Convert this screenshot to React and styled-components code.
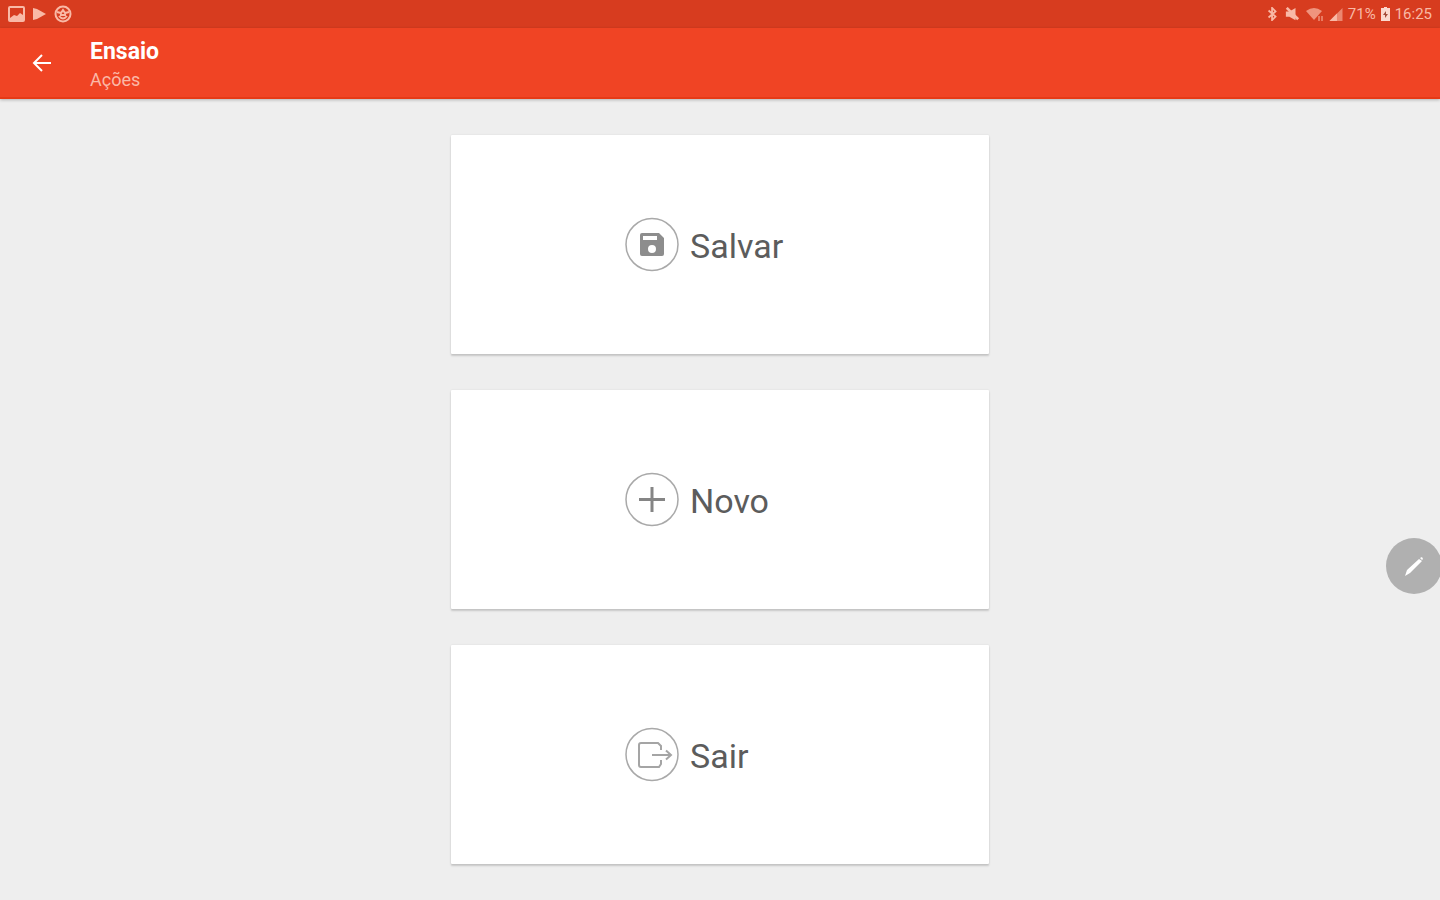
import React from "react";
import styled, { createGlobalStyle } from "styled-components";

const GlobalStyle = createGlobalStyle`
  * { box-sizing: border-box; }
  body {
    margin: 0;
    background: #eeeeee;
    font-family: Roboto, "Liberation Sans", sans-serif;
  }
  button { font: inherit; border: 0; padding: 0; cursor: pointer; }
`;

const Page = styled.div`
  min-height: 100vh;
  background: #eeeeee;
`;

const StatusBar = styled.div`
  display: flex;
  align-items: center;
  justify-content: space-between;
  height: 28px;
  padding: 0 8px;
  background: #d73c1f;
  color: #f9b9a6;
`;

const StatusGroup = styled.div`
  display: flex;
  align-items: center;
  gap: ${(p) => p.$gap}px;
  font-size: 15px;
  line-height: 28px;
  svg { display: block; }
`;

const AppBar = styled.header`
  display: flex;
  align-items: center;
  gap: 32px;
  height: 71px;
  padding: 0 26px;
  background: #f04424;
  border-bottom: 2px solid #e63a15;
  box-shadow: 0 1px 3px rgba(0, 0, 0, 0.25);
  color: #ffffff;
`;

const BackButton = styled.button`
  display: grid;
  place-items: center;
  width: 32px;
  height: 32px;
  background: transparent;
  color: inherit;
`;

const Heading = styled.div`
  padding-top: 6px;
`;

const Title = styled.h1`
  margin: 0;
  font-size: 23px;
  line-height: 28px;
  font-weight: 700;
`;

const Subtitle = styled.p`
  margin: 0;
  font-size: 18px;
  line-height: 28px;
  color: #fbb9a8;
`;

const Actions = styled.main`
  display: flex;
  flex-direction: column;
  align-items: center;
  gap: 36px;
  padding: 36px 24px;
`;

const ActionCard = styled.button`
  display: flex;
  align-items: center;
  justify-content: center;
  width: 40%;
  max-width: 538px;
  min-width: 280px;
  height: 219px;
  background: #ffffff;
  border-radius: 1px;
  box-shadow: 0 2px 2px rgba(0, 0, 0, 0.16), 0 0 2px rgba(0, 0, 0, 0.1);
  color: #5c5c5c;
`;

const ActionContent = styled.span`
  display: flex;
  align-items: center;
  gap: 10px;
  width: 192px;
  svg { display: block; flex: none; }
`;

const ActionLabel = styled.span`
  font-size: 34px;
  line-height: 40px;
  padding-top: 2px;
`;

const EditHandle = styled.button`
  position: fixed;
  right: -2px;
  top: 538px;
  display: grid;
  place-items: center;
  width: 56px;
  height: 56px;
  border-radius: 50%;
  background: #b0b0b0;
  color: #ffffff;
`;

const glyphs = {
  save: (
    <path
      fill="#8d8d8d"
      fillRule="evenodd"
      d="M18 16h17l5 5v16a2 2 0 0 1-2 2H18a2 2 0 0 1-2-2V18a2 2 0 0 1 2-2zM19 19v4h14v-4zM28 28a4 4 0 1 0 0 8a4 4 0 0 0 0-8z"
    />
  ),
  add: <path fill="none" stroke="#858585" strokeWidth="3" d="M28 15v25M15 27.5h26" />,
  exit: (
    <g fill="none" stroke="#a5a5a5" strokeWidth="2">
      <path d="M37 23v-4l-3-3H17q-2 0-2 2v20q0 2 2 2h18l2-3v-4" />
      <path d="M28 28h19M42 23.500l5 4.500l-5 4.500" />
    </g>
  ),
};

function ActionIcon({ name }) {
  return (
    <svg width="56" height="56" viewBox="0 0 56 56" aria-hidden="true">
      <circle cx="28" cy="27.500" r="26" fill="none" stroke="#a9a9a9" strokeWidth="1.500" />
      {glyphs[name]}
    </svg>
  );
}

const actions = [
  { icon: "save", label: "Salvar" },
  { icon: "add", label: "Novo" },
  { icon: "exit", label: "Sair" },
];

export default function App() {
  return (
    <Page>
      <GlobalStyle />
      <StatusBar>
        <StatusGroup $gap={8}>
          <svg width="17" height="16" viewBox="0 0 17 16" aria-hidden="true">
            <path fill="currentColor" fillRule="evenodd" d="M2 0h13q2 0 2 2v12q0 2-2 2H2q-2 0-2-2V2Q0 0 2 0zM2 2v10l4-3l3 1l3-3l3 2V2z" />
          </svg>
          <svg width="13" height="14" viewBox="0 0 13 14" aria-hidden="true">
            <path fill="currentColor" d="M0 1l4 1l9 5l-9 5l-4 1z" />
          </svg>
          <svg width="18" height="18" viewBox="0 0 18 18" fill="none" stroke="currentColor" strokeWidth="2" aria-hidden="true">
            <circle cx="9" cy="9" r="7.500" />
            <path d="M3 7l4 1l2-3l2 3l4-1M5 11q4 5 8 0M6 10h6" />
          </svg>
        </StatusGroup>
        <StatusGroup $gap={5}>
          <svg width="11" height="14" viewBox="0 0 11 16" fill="none" stroke="currentColor" strokeWidth="2" aria-hidden="true">
            <path d="M1 4l8 7l-4 4V1l4 4l-8 7" />
          </svg>
          <svg width="18" height="14" viewBox="0 0 18 16" aria-hidden="true">
            <path fill="currentColor" d="M2 5h4l7-4v14l-7-4H2z" />
            <path d="M3 1l13 13" stroke="currentColor" strokeWidth="3" />
          </svg>
          <svg width="18" height="16" viewBox="0 0 18 16" aria-hidden="true">
            <path fill="currentColor" opacity="0.700" d="M0 5q8-6 16 0l-8 9z" />
            <path d="M13 10v5M16 10v5" stroke="currentColor" />
          </svg>
          <svg width="14" height="13" viewBox="0 0 14 14" aria-hidden="true">
            <path fill="currentColor" opacity="0.600" d="M14 0v14H0z" />
            <path fill="currentColor" d="M8 6v8H0z" />
          </svg>
          <span>71%</span>
          <svg width="9" height="14" viewBox="0 0 9 14" aria-hidden="true">
            <path fill="#fbd8cd" d="M3 0h3v1h3v13H0V1h3z" />
            <path fill="#a34a38" d="M5 4L2 8h2v3l3-4H5z" />
          </svg>
          <span>16:25</span>
        </StatusGroup>
      </StatusBar>
      <AppBar>
        <BackButton aria-label="Voltar">
          <svg width="20" height="20" viewBox="0 0 20 20" fill="none" stroke="currentColor" strokeWidth="2" aria-hidden="true">
            <path d="M19 10H2M10 2l-8 8l8 8" />
          </svg>
        </BackButton>
        <Heading>
          <Title>Ensaio</Title>
          <Subtitle>Ações</Subtitle>
        </Heading>
      </AppBar>
      <Actions>
        {actions.map(({ icon, label }) => (
          <ActionCard key={label} type="button">
            <ActionContent>
              <ActionIcon name={icon} />
              <ActionLabel>{label}</ActionLabel>
            </ActionContent>
          </ActionCard>
        ))}
      </Actions>
      <EditHandle aria-label="Editar">
        <svg width="24" height="24" viewBox="0 0 24 24" aria-hidden="true">
          <path fill="currentColor" d="M3 22l2-6L17 5l3 2L8 19zM18 4l2-1l1 2l-1 1z" />
        </svg>
      </EditHandle>
    </Page>
  );
}
